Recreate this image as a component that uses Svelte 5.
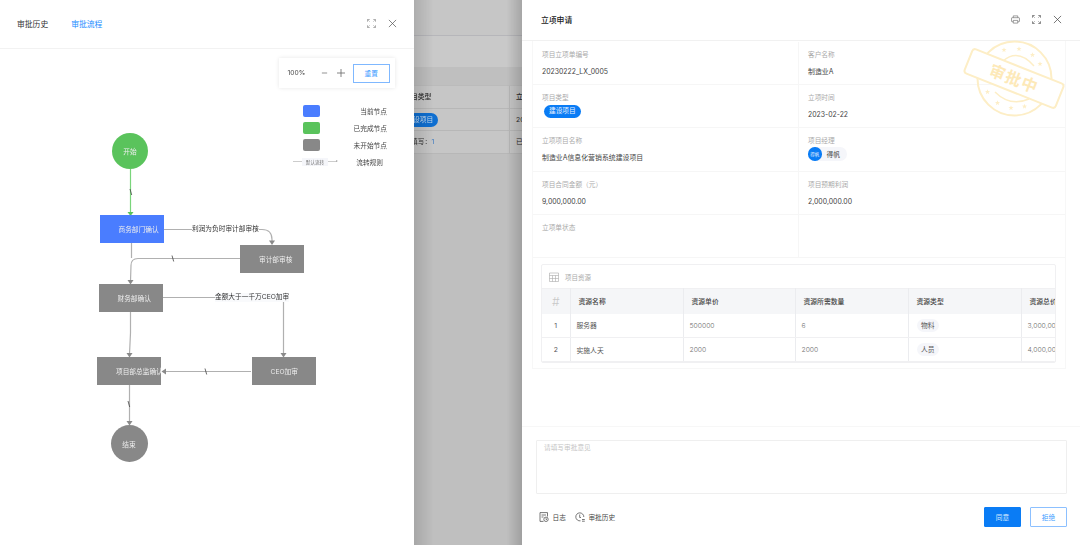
<script>
  const legend = [
    { cls: 'blue', label: '当前节点' },
    { cls: 'green', label: '已完成节点' },
    { cls: 'gray', label: '未开始节点' }
  ];
  const nodes = [
    { label: '开始', x: 112, y: 133, w: 36, h: 36, kind: 'circle green' },
    { label: '商务部门确认', x: 99.5, y: 215, w: 64, h: 28, kind: 'rect blue' },
    { label: '审计部审核', x: 240, y: 244.5, w: 64, h: 28, kind: 'rect gray' },
    { label: '财务部确认', x: 98.5, y: 284, w: 64, h: 28, kind: 'rect gray' },
    { label: '项目部总监确认', x: 97, y: 357, w: 64, h: 28, kind: 'rect gray' },
    { label: 'CEO加审', x: 251.5, y: 357, w: 64, h: 28, kind: 'rect gray' },
    { label: '结束', x: 110.5, y: 425, w: 37, h: 37, kind: 'circle gray' }
  ];
  const fields = [
    [{ l: '项目立项单编号', v: '20230222_LX_0005' }, { l: '客户名称', v: '制造业A' }],
    [{ l: '项目类型', tag: '建设项目' }, { l: '立项时间', v: '2023-02-22' }],
    [{ l: '立项项目名称', v: '制造业A信息化营销系统建设项目' }, { l: '项目经理', user: '得帆' }],
    [{ l: '项目合同金额（元）', v: '9,000,000.00' }, { l: '项目预期利润', v: '2,000,000.00' }],
    [{ l: '立项单状态' }, {}]
  ];
  const rows = [
    { n: 1, name: '服务器', price: '500000', qty: '6', type: '物料', total: '3,000,000.00' },
    { n: 2, name: '实施人天', price: '2000', qty: '2000', type: '人员', total: '4,000,000.00' }
  ];
  const colWidths = [28, 113, 112, 113, 113, 113];
  const starAt = [[1004, 50], [1019, 49], [1032.5, 55], [1040, 64], [987.5, 92], [997.5, 103], [1011, 108], [1024.5, 106.5]];
  function star([cx, cy]) {
    const pts = [];
    for (let i = 0; i < 10; i++) {
      const r = i % 2 ? 1.1 : 2.7;
      const a = (Math.PI / 5) * i - Math.PI / 2;
      pts.push((cx + r * Math.cos(a)).toFixed(2) + ',' + (cy + r * Math.sin(a)).toFixed(2));
    }
    return pts.join(' ');
  }
</script>

<div class="screen">
  <section class="flow-panel">
    <header class="flow-head">
      <div class="tabs">
        <span class="tab">审批历史</span>
        <span class="tab active">审批流程</span>
      </div>
      <div class="tools">
        <svg class="ico" viewBox="0 0 10 10" fill="none" stroke="#777" stroke-width=".7">
          <path d="M.5 3V.5H3M7 .5h2.500V3M9.500 7v2.500H7M3 9.500H.5V7M1.500 1.500l1.300 1.300M8.500 1.500L7.200 2.800M8.500 8.500L7.200 7.200M1.500 8.500l1.300-1.300" />
        </svg>
        <svg class="ico" viewBox="0 0 10 10" fill="none" stroke="#555" stroke-width=".8">
          <path d="M1 1l8 8M9 1l-8 8" />
        </svg>
      </div>
    </header>
    <div class="canvas">
      <svg class="edges" viewBox="0 49 414 496" fill="none">
        <path d="M130.500 169V212" stroke="#7ad57b" stroke-width="1.200" />
        <path d="M127.500 212l3 4 3-4z" fill="#5ac35c" />
        <g stroke="#b0b0b0" stroke-width="1.200">
          <path d="M163 229.500H262q10 0 10 10V242" />
          <path d="M131.500 243V258" />
          <path d="M240 258.500H138q-7 0-7 7L130.500 281" />
          <path d="M162 297.500H283.500V354" />
          <path d="M130.500 312V333L129.500 354" />
          <path d="M251 371.500H165" />
          <path d="M129.500 385V422" />
        </g>
        <g fill="#8a8a8a">
          <path d="M269 240.500l3 4.500 3-4.500z" />
          <path d="M127.500 280l3 4.500 3-4.500z" />
          <path d="M280.500 353l3 4.500 3-4.500z" />
          <path d="M126.500 353l3 4.500 3-4.500z" />
          <path d="M166 368.500l-4.500 3 4.500 3z" />
          <path d="M126.500 421l3 4.500 3-4.500z" />
        </g>
        <g stroke="#444" stroke-width=".8">
          <path d="M130 189l1.700 6" />
          <path d="M172 255.500l1.700 6" />
          <path d="M205 368.500l1.700 6" />
          <path d="M128 401l1.700 6" />
        </g>
      </svg>
      <span class="edge-label l1">利润为负时审计部审核</span>
      <span class="edge-label l2">金额大于一千万CEO加审</span>
      {#each nodes as n}
        <div class="node {n.kind}" style="left:{n.x}px;top:{n.y - 49}px;width:{n.w}px;height:{n.h}px">
          <span>{n.label}</span>
        </div>
      {/each}

      <div class="zoombox">
        <span class="pct">100%</span>
        <svg class="zoom-ico minus" viewBox="0 0 8 8" stroke="#666" stroke-width=".8"><path d="M1 4h6" /></svg>
        <svg class="zoom-ico" viewBox="0 0 8 8" stroke="#666" stroke-width=".8"><path d="M0 4h8M4 0v8" /></svg>
        <button class="reset">重置</button>
      </div>

      <div class="legend">
        {#each legend as item}
          <div class="leg-row">
            <i class="swatch {item.cls}"></i>
            <span class="leg-label">{item.label}</span>
          </div>
        {/each}
        <div class="leg-row rule">
          <div class="rule-sample">
            <i class="rule-line"></i>
            <span class="rule-text">默认流转</span>
            <i class="rule-line arrow"></i>
          </div>
          <span class="leg-label rule-label">流转规则</span>
        </div>
      </div>
    </div>
  </section>

  <section class="backdrop">
    <div class="b-top"></div>
    <div class="b-sub"></div>
    <div class="b-gap"></div>
    <div class="b-table">
      <div class="b-row head"><span class="b-a">目类型</span><span class="b-b">立</span></div>
      <div class="b-row"><span class="b-a"><em class="b-pill">设项目</em></span><span class="b-b">20</span></div>
      <div class="b-row"><span class="b-a">填写：<b>1</b></span><span class="b-b">已</span></div>
    </div>
  </section>

  <section class="detail">
    <header class="d-head">
      <span class="d-title">立项申请</span>
      <div class="d-tools">
        <svg class="ico" viewBox="0 0 10 10" fill="none" stroke="#666" stroke-width=".7">
          <path d="M2.500 3V1h5v2M2.500 7.500H1.200a.6.6 0 0 1-.6-.6V3.600a.6.6 0 0 1 .6-.6h7.600a.6.6 0 0 1 .6.6v3.300a.6.6 0 0 1-.6.6H7.500M2.500 6h5v3h-5z" />
        </svg>
        <svg class="ico" viewBox="0 0 10 10" fill="none" stroke="#555" stroke-width=".8">
          <path d="M.5 3V.5H3M7 .5h2.500V3M9.500 7v2.500H7M3 9.500H.5V7M1.500 1.500l1.300 1.300M8.500 1.500L7.200 2.800M8.500 8.500L7.200 7.200M1.500 8.500l1.300-1.300" />
        </svg>
        <svg class="ico" viewBox="0 0 10 10" fill="none" stroke="#444" stroke-width=".8">
          <path d="M1 1l8 8M9 1l-8 8" />
        </svg>
      </div>
    </header>

    <div class="d-body">
      <div class="form">
        {#each fields as row}
          <div class="f-row">
            {#each row as f}
              <div class="f-cell">
                {#if f.l}<div class="f-label">{f.l}</div>{/if}
                {#if f.v}<div class="f-value">{f.v}</div>{/if}
                {#if f.tag}<span class="f-tag">{f.tag}</span>{/if}
                {#if f.user}
                  <span class="f-user"><i class="avatar">得帆</i>{f.user}</span>
                {/if}
              </div>
            {/each}
          </div>
        {/each}
      </div>

      <div class="res-wrap">
        <div class="res-card">
          <div class="res-caption">
            <svg class="tbl-ico" viewBox="0 0 10 10" fill="none" stroke="#aaa" stroke-width=".6">
              <path d="M.5 1h9v8.500h-9zM.5 3.500h9M.5 6.500h9M3.500 3.500v6M6.500 3.500v6" />
            </svg>
            项目资源
          </div>
          <table>
            <colgroup>
              {#each colWidths as w}<col style="width:{w}px" />{/each}
            </colgroup>
            <thead>
              <tr>
                <th class="c-n"><span class="hash">#</span></th>
                <th>资源名称</th>
                <th>资源单价</th>
                <th>资源所需数量</th>
                <th>资源类型</th>
                <th>资源总价</th>
              </tr>
            </thead>
            <tbody>
              {#each rows as r}
                <tr>
                  <td class="c-n">{r.n}</td>
                  <td>{r.name}</td>
                  <td class="num">{r.price}</td>
                  <td class="num">{r.qty}</td>
                  <td><span class="pill">{r.type}</span></td>
                  <td class="num">{r.total}</td>
                </tr>
              {/each}
            </tbody>
          </table>
        </div>
      </div>

      <svg class="stamp" viewBox="960 36 110 86" fill="none" stroke="#fdeec6">
        <circle cx="1014.500" cy="78.500" r="37" stroke-width="2" />
        <path d="M1003 61Q1018 48 1034 66M995 92Q1010 107 1029 99" stroke-width="1.500" />
        {#each starAt as s}
          <polygon points={star(s)} fill="#fdeec6" stroke="none" />
        {/each}
        <g transform="rotate(21.700 1014 78.500)">
          <rect x="965" y="65.500" width="98" height="26" rx="3" fill="#fff" stroke-width="2" />
          <text x="1014" y="84.500" text-anchor="middle" class="stamp-text">审批中</text>
        </g>
      </svg>
    </div>

    <footer class="d-foot">
      <div class="opinion">请填写审批意见</div>
      <div class="actions">
        <div class="links">
          <span class="link">
            <svg viewBox="0 0 10 10" fill="none" stroke="#555" stroke-width=".8">
              <path d="M8.500 4.500V.6H1v8.800h3.500M2.500 3h4.500M2.500 5h2" /><circle cx="7" cy="7.300" r="2.200" /><path d="M7 6.300v1.100h1" />
            </svg>
            日志
          </span>
          <span class="link">
            <svg viewBox="0 0 10 10" fill="none" stroke="#555" stroke-width=".8">
              <path d="M5.500 8.800A4 4 0 1 1 8.800 5M4.700 2.500v3H6M7 7.500h2.800M7 9.200h2.800" />
            </svg>
            审批历史
          </span>
        </div>
        <div class="btns">
          <button class="btn primary">同意</button>
          <button class="btn ghost">拒绝</button>
        </div>
      </div>
    </footer>
  </section>
</div>

<style>
  :global(body) {
    margin: 0;
    background: #fff;
  }
  .screen {
    display: flex;
    width: 1080px;
    height: 545px;
    overflow: hidden;
    font-family: Inter, "Noto Sans CJK SC", sans-serif;
    color: #333;
    filter: blur(0.45px);
  }

  /* left panel */
  .flow-panel {
    width: 414px;
    flex: none;
    background: #fff;
    display: flex;
    flex-direction: column;
  }
  .flow-head {
    height: 49px;
    box-sizing: border-box;
    border-bottom: 1px solid #f2f2f2;
    display: flex;
    align-items: center;
    justify-content: space-between;
    padding: 0 17px 1px;
  }
  .tabs {
    display: flex;
    gap: 23px;
  }
  .tab {
    font-size: 7.800px;
    color: #333;
  }
  .tab.active {
    color: #1a8cff;
  }
  .tools {
    display: flex;
    gap: 12px;
    align-items: center;
  }
  .ico {
    width: 9px;
    height: 9px;
    display: block;
  }
  .canvas {
    position: relative;
    flex: 1;
  }
  .edges {
    position: absolute;
    inset: 0;
    width: 414px;
    height: 496px;
  }
  .edge-label {
    position: absolute;
    font-size: 6.700px;
    line-height: 9px;
    color: #333;
    background: #fff;
    white-space: nowrap;
  }
  .l1 {
    left: 192px;
    top: 175.500px;
  }
  .l2 {
    left: 215px;
    top: 244px;
    background: #f9fafc;
  }
  .node {
    position: absolute;
    display: flex;
    align-items: center;
    box-sizing: border-box;
    color: #eee;
    font-size: 6.700px;
    overflow: hidden;
    white-space: nowrap;
  }
  .node.rect {
    padding-left: 19px;
  }
  .node.circle {
    border-radius: 50%;
    justify-content: center;
  }
  .node.blue,
  .swatch.blue {
    background: #4a7dff;
  }
  .node.green,
  .swatch.green {
    background: #5ac35c;
  }
  .node.gray,
  .swatch.gray {
    background: #888;
  }
  .zoombox {
    position: absolute;
    left: 278.500px;
    top: 9px;
    width: 116px;
    height: 30px;
    box-sizing: border-box;
    background: #fff;
    box-shadow: 0 0 4px rgba(0, 0, 0, 0.1);
    display: flex;
    align-items: center;
    padding: 0 5px 0 9px;
  }
  .pct {
    font-size: 6.700px;
    color: #444;
    width: 34px;
  }
  .zoom-ico {
    width: 8px;
    height: 8px;
    margin-right: 8px;
    flex: none;
  }
  .zoom-ico.minus {
    width: 7px;
    margin-right: 9px;
  }
  .reset {
    width: 37px;
    height: 19px;
    margin-left: auto;
    padding: 0;
    background: #fff;
    border: 1.500px solid #7fb8ff;
    color: #3b9bff;
    font: inherit;
    font-size: 6.700px;
  }
  .legend {
    position: absolute;
    left: 293px;
    top: 56px;
    width: 94px;
    display: flex;
    flex-direction: column;
    gap: 5.500px;
  }
  .leg-row {
    display: flex;
    align-items: center;
    justify-content: space-between;
    height: 11.500px;
    padding-left: 10px;
  }
  .swatch {
    width: 17px;
    height: 11.500px;
    border-radius: 2px;
  }
  .leg-label {
    font-size: 6.700px;
    color: #444;
  }
  .leg-row.rule {
    padding-left: 0;
    padding-right: 4px;
  }
  .rule-sample {
    display: flex;
    align-items: center;
    width: 45px;
  }
  .rule-line {
    position: relative;
    width: 9px;
    height: 1px;
    background: #ccc;
    flex: none;
  }
  .rule-line.arrow::after {
    content: "";
    position: absolute;
    right: -1px;
    top: -1px;
    border-left: 2.500px solid #aaa;
    border-top: 1.500px solid transparent;
    border-bottom: 1.500px solid transparent;
  }
  .rule-text {
    font-size: 4.600px;
    color: #777;
    background: #f5f6fa;
    padding: 1px 1px;
    width: 26px;
    box-sizing: border-box;
    text-align: center;
    white-space: nowrap;
  }

  /* dimmed page between the drawers */
  .backdrop {
    position: relative;
    width: 108px;
    flex: none;
    background: #bfbfbf;
    overflow: hidden;
  }
  .backdrop::after {
    content: "";
    position: absolute;
    inset: 0;
    background: linear-gradient(90deg, rgba(0, 0, 0, 0.12), rgba(0, 0, 0, 0) 18%, rgba(0, 0, 0, 0) 86%, rgba(0, 0, 0, 0.16));
  }
  .b-top {
    height: 35px;
    background: #c6c6c6;
    border-bottom: 1px solid #b6b6ba;
  }
  .b-sub {
    height: 31px;
    background: #c9c9c9;
  }
  .b-gap {
    height: 18px;
    background: #bfbfbf;
  }
  .b-table {
    background: #c6c6c6;
    font-size: 6.800px;
    color: #2b2b2b;
    border-top: 1px solid #bbb;
  }
  .b-row {
    height: 22.700px;
    box-sizing: border-box;
    border-bottom: 1px solid #b7b7b7;
    display: flex;
    white-space: nowrap;
    line-height: 21.500px;
  }
  .b-row.head {
    font-weight: 500;
  }
  .b-a {
    width: 96px;
    box-sizing: border-box;
    border-right: 1px solid #b7b7b7;
    flex: none;
    overflow: hidden;
    text-indent: -3px;
  }
  .b-b {
    padding-left: 6px;
  }
  .b-row b {
    font-weight: 400;
    color: #3a78c0;
  }
  .b-pill {
    display: inline-block;
    vertical-align: middle;
    text-indent: 0;
    margin-left: -3px;
    font-style: normal;
    background: #0f6fd1;
    color: #c9dcf0;
    border-radius: 7px;
    height: 13.500px;
    line-height: 13.500px;
    padding: 0 5px;
  }

  /* right panel */
  .detail {
    flex: 1;
    background: #fff;
    display: flex;
    flex-direction: column;
    min-width: 0;
  }
  .d-head {
    height: 41px;
    box-sizing: border-box;
    border-bottom: 1px solid #f1f1f1;
    display: flex;
    align-items: center;
    justify-content: space-between;
    padding: 0 18px 2px 19px;
    flex: none;
  }
  .d-title {
    font-size: 7.800px;
    font-weight: 500;
    color: #222;
  }
  .d-tools {
    display: flex;
    gap: 12px;
  }
  .d-body {
    position: relative;
    flex: 1;
    min-height: 0;
    padding: 0 14px 0 10px;
  }
  .form {
    border-left: 1px solid #f7f7f7;
    border-right: 1px solid #f7f7f7;
    padding-top: 0.700px;
  }
  .f-row {
    display: grid;
    grid-template-columns: 265px 1fr;
    height: 43.300px;
    box-sizing: border-box;
    border-bottom: 1px solid #f6f6f6;
  }
  .f-cell {
    padding: 9px 0 0 9px;
    box-sizing: border-box;
  }
  .f-cell + .f-cell {
    border-left: 1px solid #f6f6f6;
  }
  .f-label {
    font-size: 6.700px;
    line-height: 9px;
    color: #aaa;
  }
  .f-value {
    font-size: 6.900px;
    line-height: 10px;
    color: #444;
    margin-top: 7px;
  }
  .f-tag {
    display: block;
    width: fit-content;
    margin: 2px 0 0 2px;
    background: #0a7cf5;
    color: #e8f2ff;
    font-size: 6.700px;
    line-height: 13.500px;
    height: 13.500px;
    padding: 0 5px;
    border-radius: 7px;
  }
  .f-user {
    display: flex;
    width: fit-content;
    align-items: center;
    gap: 5px;
    margin-top: 1px;
    padding-right: 7px;
    height: 13.500px;
    border-radius: 7px;
    background: #f5f6fa;
    font-size: 6.700px;
    color: #444;
  }
  .avatar {
    width: 13.500px;
    height: 13.500px;
    border-radius: 50%;
    background: #0a7cf5;
    color: #e8f2ff;
    font-style: normal;
    font-size: 4.400px;
    display: flex;
    align-items: center;
    justify-content: center;
    white-space: nowrap;
  }
  .res-wrap {
    border: 1px solid #f7f7f7;
    border-top: 0;
    padding: 6px 9px 7px 8px;
    height: 111px;
    box-sizing: border-box;
  }
  .res-card {
    border: 1px solid #f0f0f2;
    border-radius: 2px;
    overflow: hidden;
  }
  .res-caption {
    height: 23px;
    display: flex;
    align-items: center;
    gap: 6px;
    padding-left: 7px;
    font-size: 6.500px;
    color: #aaa;
  }
  .tbl-ico {
    width: 10px;
    height: 10px;
  }
  table {
    border-collapse: collapse;
    table-layout: fixed;
    width: 592px;
    font-size: 6.800px;
    color: #555;
  }
  th {
    height: 25px;
    box-sizing: border-box;
    background: #f5f6f8;
    font-weight: 500;
    text-align: left;
    padding: 0 0 0 8px;
    color: #444;
    border-right: 1px solid #ebecef;
    border-top: 1px solid #f0f0f2;
    white-space: nowrap;
  }
  td {
    height: 24px;
    box-sizing: border-box;
    padding: 0 0 0 6px;
    border-right: 1px solid #ebecef;
    border-bottom: 1px solid #f0f0f2;
    white-space: nowrap;
    overflow: hidden;
  }
  td.num {
    color: #707070;
    font-weight: 300;
  }
  th.c-n,
  td.c-n {
    text-align: center;
    padding: 0;
  }
  .hash {
    font-size: 12px;
    color: #c8c8c8;
    font-weight: 300;
  }
  .pill {
    display: inline-block;
    background: #f5f6fa;
    padding: 0 4.500px;
    height: 13px;
    line-height: 13px;
    border-radius: 7px;
    margin-left: 2px;
    color: #555;
  }
  .stamp {
    position: absolute;
    left: 438px;
    top: -5px;
    width: 110px;
    height: 86px;
    pointer-events: none;
  }
  .stamp-text {
    font-family: "Noto Sans CJK SC", sans-serif;
    font-size: 16px;
    font-weight: 700;
    fill: #fde9b8;
    stroke: none;
    letter-spacing: 1px;
  }

  .d-foot {
    height: 119px;
    flex: none;
    box-sizing: border-box;
    border-top: 1px solid #f7f7f7;
    padding: 13px 13px 0 14px;
  }
  .opinion {
    height: 54px;
    border: 1px solid #efefef;
    border-radius: 1px;
    padding: 3px 7px;
    font-size: 6.700px;
    line-height: 9px;
    color: #c4c4c4;
    box-sizing: border-box;
  }
  .actions {
    display: flex;
    justify-content: space-between;
    align-items: center;
    margin-top: 13px;
    height: 20px;
  }
  .links {
    display: flex;
    gap: 9px;
    padding-left: 3px;
  }
  .link {
    display: flex;
    align-items: center;
    gap: 3.500px;
    font-size: 6.700px;
    color: #444;
  }
  .link svg {
    width: 10px;
    height: 10px;
  }
  .btns {
    display: flex;
    gap: 9px;
  }
  .btn {
    width: 37px;
    height: 20px;
    padding: 0;
    font: inherit;
    font-size: 6.700px;
    border-radius: 1px;
  }
  .btn.primary {
    background: #0a7cf5;
    border: 1px solid #0a7cf5;
    color: #dcecff;
  }
  .btn.ghost {
    background: #fff;
    border: 1px solid #8cc0ff;
    color: #3b9bff;
  }
</style>
